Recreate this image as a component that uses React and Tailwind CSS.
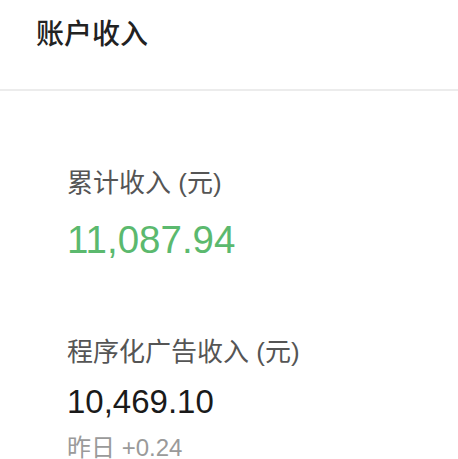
export default function App() {
  const font = { fontFamily: '"Liberation Sans", "Noto Sans CJK SC", sans-serif' };
  return (
    <div className="w-[458px] h-[459px] bg-white overflow-hidden" style={font}>
      <div className="h-[91px] pl-[36px] pt-[17px] border-b-2 border-[#ececec]">
        <div className="text-[28px] leading-[36px] font-medium text-[#222]">账户收入</div>
      </div>
      <div className="pl-[67px] pt-[76px] flex flex-col">
        <div className="text-[26px] leading-[32px] text-[#555]">累计收入 (元)</div>
        <div className="mt-[19px] text-[38.5px] leading-[44px] text-[#5bb96e]">11,087.94</div>
        <div className="mt-[74px] text-[26px] leading-[32px] text-[#555]">程序化广告收入 (元)</div>
        <div className="mt-[14px] text-[33px] leading-[40px] text-[#1a1a1a]">10,469.10</div>
        <div className="mt-[10px] text-[24px] leading-[32px] text-[#9a9a9a]">昨日 +0.24</div>
      </div>
    </div>
  );
}
